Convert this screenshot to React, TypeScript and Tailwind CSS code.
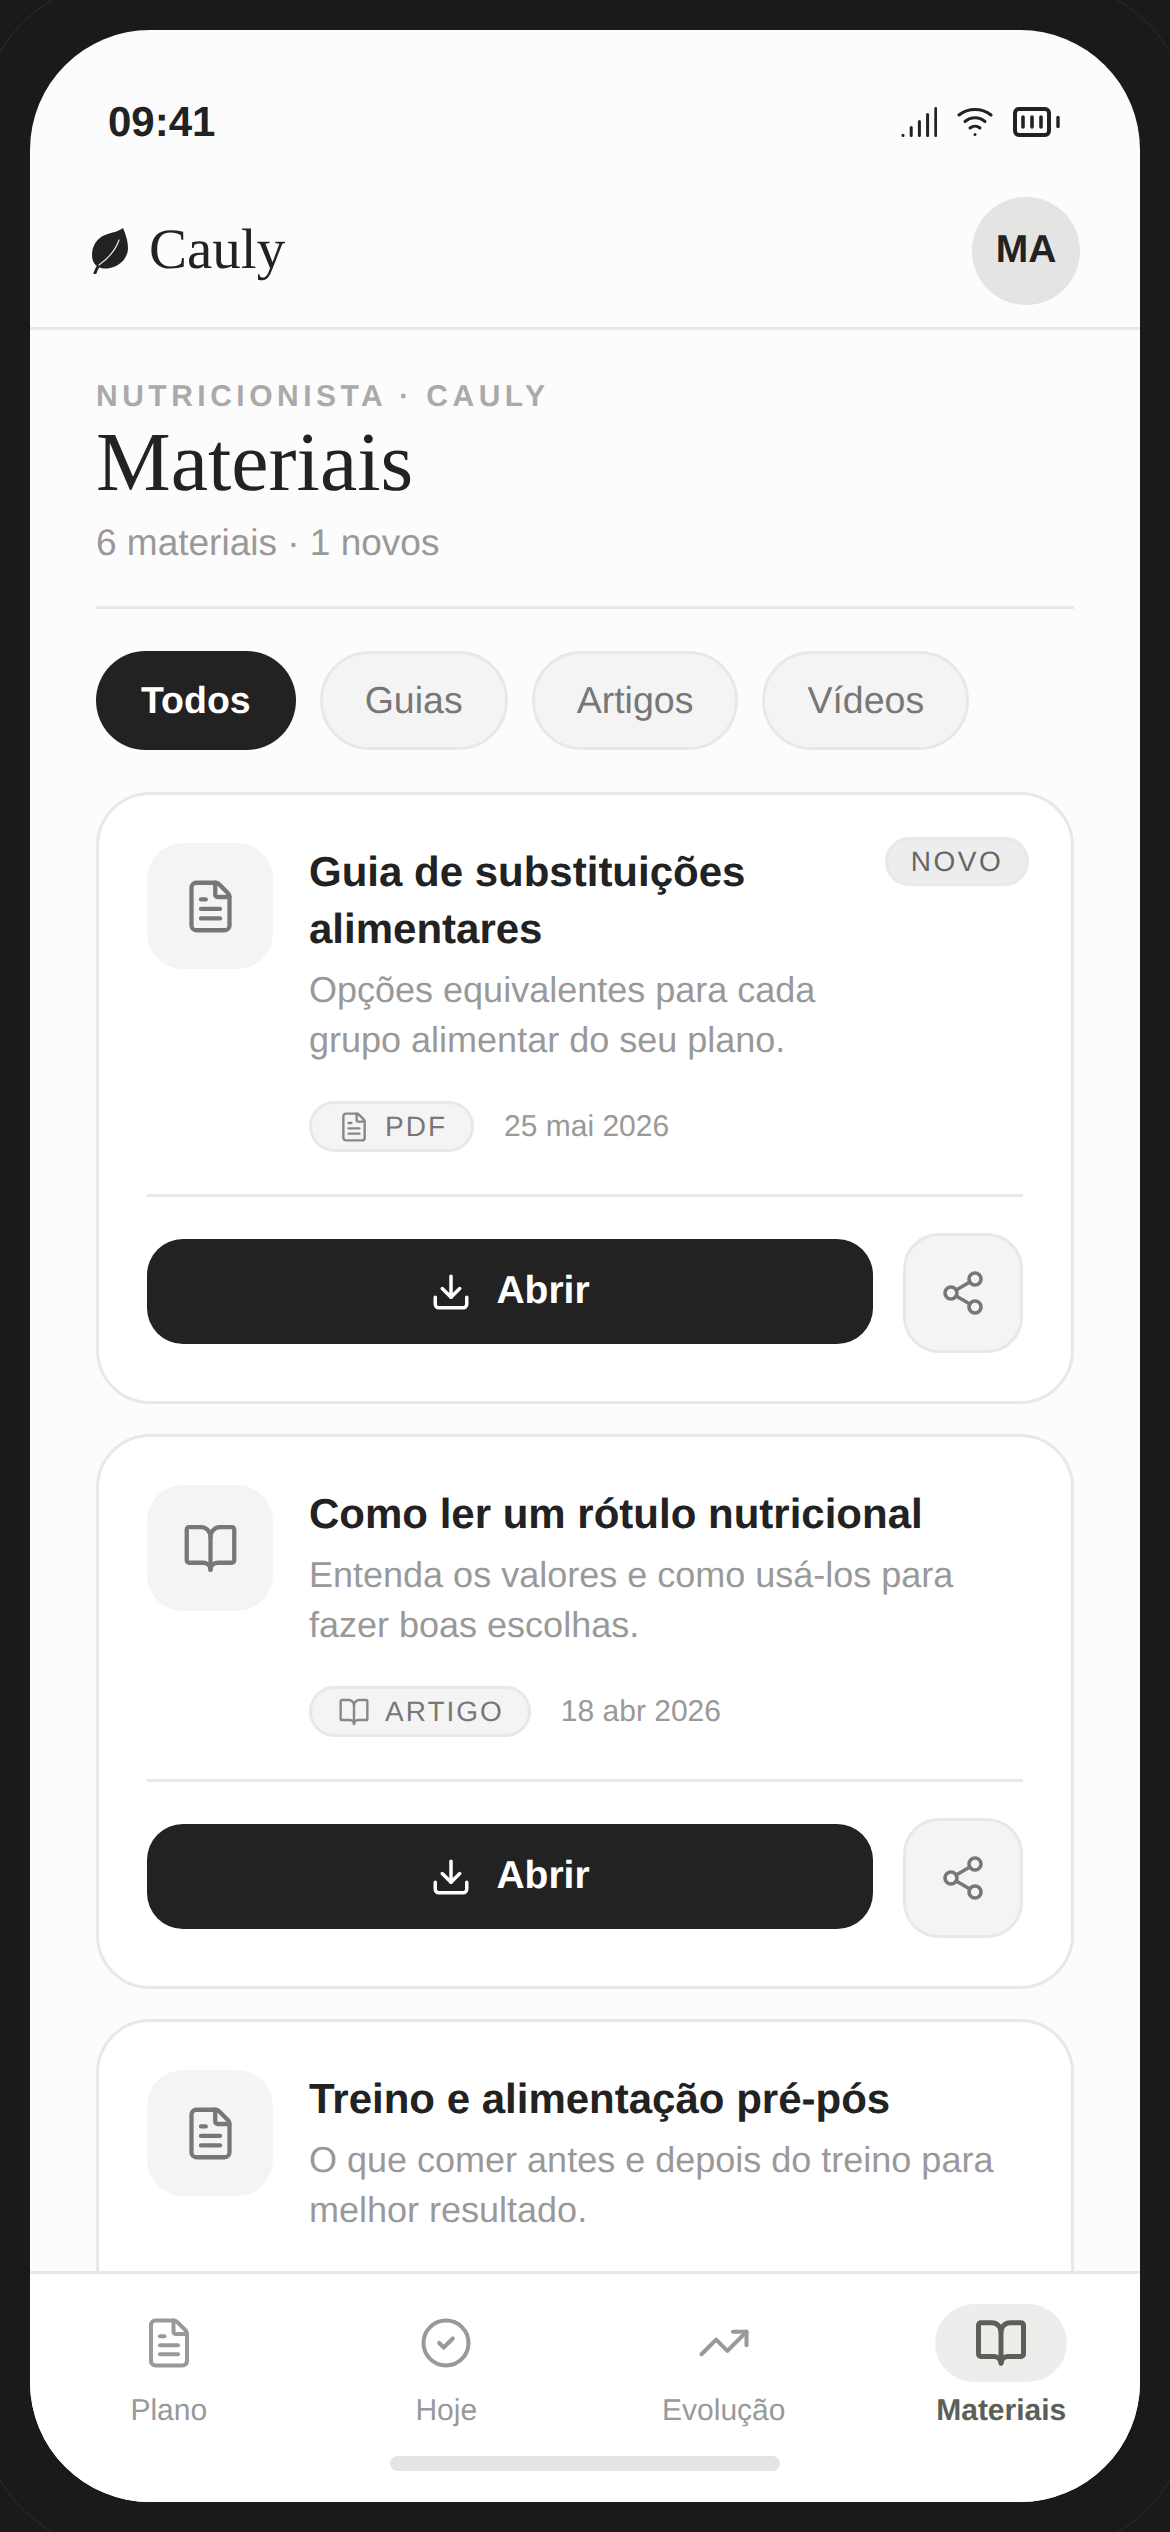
import { FileText, BookOpen, Download, Share2, CircleCheck, TrendingUp } from "lucide-react";

const sans = "font-['Liberation_Sans',Arial,sans-serif]";
const serif = "font-['Liberation_Serif','Times_New_Roman',serif]";

function Leaf() {
  return (
    <svg width="36" height="46" viewBox="0 0 36 46" fill="none">
      <path d="M31 0C26 4 20 4 13 7C5 10 0 18 0 27C0 32 2 36 5 38C9 41 14 41 18 40C28 38 36 30 36 20C36 12 33 5 31 0Z" fill="#222222" />
      <path d="M3 45C4 42 5 40 7 37" stroke="#222222" strokeWidth="3" strokeLinecap="round" />
      <path d="M7 37C14 32 23 24 27 12" stroke="#e8e8e8" strokeWidth="1.2" strokeLinecap="round" />
    </svg>
  );
}

function Signal() {
  return (
    <svg width="36" height="30" viewBox="0 0 36 30" fill="none" stroke="#222222" strokeWidth="3" strokeLinecap="round">
      <path d="M2 28.5v-.2M10.2 28.5v-8M18.4 28.5v-14M26.6 28.5v-21M34.8 28.5V1.5" />
    </svg>
  );
}

function Wifi() {
  return (
    <svg width="36" height="30" viewBox="0 0 36 30" fill="none" stroke="#222222" strokeWidth="3" strokeLinecap="round">
      <path d="M2 8C11 0.5 25 0.5 34 8" />
      <path d="M8 14.5C14 9.5 22 9.5 28 14.5" />
      <path d="M13 21C16 18.5 20 18.5 23 21" />
      <path d="M18 27.5v.1" />
    </svg>
  );
}

function Battery() {
  return (
    <svg width="47" height="30" viewBox="0 0 47 30" fill="none" stroke="#222222" strokeLinecap="round">
      <rect x="2" y="2" width="34" height="26" rx="4" strokeWidth="4" />
      <path d="M10 10v10M19 10v10M28 10v10" strokeWidth="3.6" />
      <path d="M45 10.5v9" strokeWidth="3.4" />
    </svg>
  );
}

type CardProps = {
  Icon: typeof FileText;
  title: string[];
  desc: string[];
  tag: string;
  date: string;
  novo?: boolean;
};

function Card({ Icon, title, desc, tag, date, novo }: CardProps) {
  return (
    <div className="relative shrink-0 rounded-[54px] border-[3px] border-[#e8e8e8] bg-white px-[48px] pt-[48px] pb-[48px]">
      {novo && (
        <span className="absolute right-[42px] top-[42px] flex h-[49px] w-[144px] items-center justify-center rounded-full border-[3px] border-[#e8e8e8] bg-[#ededed] text-[28px] tracking-[2.5px] text-[#666666]">
          NOVO
        </span>
      )}
      <div className="flex gap-[36px]">
        <div className="flex h-[126px] w-[126px] shrink-0 items-center justify-center rounded-[36px] bg-[#f4f4f4]">
          <Icon size={57} strokeWidth={1.8} color="#777777" />
        </div>
        <div className="min-w-0 flex-1">
          <div className="text-[42px] font-bold leading-[57px] text-[#222222]">
            {title.map((t) => (
              <div key={t}>{t}</div>
            ))}
          </div>
          <div className="mt-[8px] text-[36px] leading-[50px] text-[#999999]">
            {desc.map((t) => (
              <div key={t}>{t}</div>
            ))}
          </div>
          <div className="mt-[36px] flex items-center gap-[30px]">
            <span className="flex h-[51px] items-center gap-[15px] rounded-full border-[3px] border-[#e8e8e8] bg-[#f4f4f4] pl-[26px] pr-[24px] text-[28px] tracking-[2px] text-[#777777]">
              <Icon size={32} strokeWidth={1.8} color="#888888" />
              {tag}
            </span>
            <span className="text-[30px] text-[#999999]">{date}</span>
          </div>
        </div>
      </div>
      <div className="mt-[42px] h-[3px] bg-[#e8e8e8]" />
      <div className="mt-[36px] flex items-center gap-[30px]">
        <div className="mb-[3px] flex h-[105px] flex-1 items-center justify-center gap-[24px] rounded-[36px] bg-[#222222] text-[39px] font-bold text-white">
          <Download size={42} strokeWidth={2} color="#ffffff" />
          Abrir
        </div>
        <div className="flex h-[120px] w-[120px] items-center justify-center rounded-[36px] border-[3px] border-[#e8e8e8] bg-[#f4f4f4]">
          <Share2 size={48} strokeWidth={1.8} color="#777777" />
        </div>
      </div>
    </div>
  );
}

function Tab({ label, active }: { label: string; active?: boolean }) {
  return active ? (
    <span className="flex h-[99px] items-center rounded-full bg-[#222222] px-[45px] text-[37.5px] font-bold text-white">{label}</span>
  ) : (
    <span className="flex h-[99px] items-center rounded-full border-[3px] border-[#e8e8e8] bg-[#f4f4f4] px-[42px] text-[37.5px] text-[#777777]">{label}</span>
  );
}

function NavItem({ Icon, label, active }: { Icon: typeof FileText; label: string; active?: boolean }) {
  return (
    <div className="flex flex-col items-center">
      <div className={`flex h-[78px] w-[132px] items-center justify-center rounded-full ${active ? "bg-[#ededeb]" : ""}`}>
        <Icon size={54} strokeWidth={active ? 2.2 : 1.8} color={active ? "#5c5f57" : "#999999"} />
      </div>
      <span className={`mt-[11px] text-[30px] leading-[36px] ${active ? "font-bold text-[#5c5f57]" : "text-[#999999]"}`}>{label}</span>
    </div>
  );
}

export default function App() {
  return (
    <div className={`relative h-[2532px] w-[1170px] overflow-hidden bg-[#1a1a1a] p-[30px] [text-rendering:geometricPrecision] ${sans}`}>
      <div className="absolute -inset-[21px] rounded-[148px] border border-[#2c2c2c]" />
      <div className="relative flex h-[2472px] w-[1110px] flex-col overflow-hidden rounded-[120px] bg-[#fcfcfc]">
        <div className="flex h-[144px] shrink-0 items-center justify-between pl-[78px] pr-[80px] pt-[40px]">
          <span className="text-[42px] font-bold leading-[50px] text-[#222222]">09:41</span>
          <div className="flex items-center gap-[20px]">
            <Signal />
            <Wifi />
            <Battery />
          </div>
        </div>
        <div className="flex h-[156px] shrink-0 items-center justify-between border-b-[3px] border-[#e8e8e8] pl-[62px] pr-[60px]">
          <div className="flex items-center gap-[21px]">
            <Leaf />
            <span className={`${serif} mb-[2px] text-[57px] leading-none text-[#222222]`}>Cauly</span>
          </div>
          <div className="flex h-[108px] w-[108px] items-center justify-center rounded-full bg-[#e4e4e2] text-[39px] font-bold text-[#222222]">
            MA
          </div>
        </div>
        <div className="flex min-h-0 flex-1 flex-col overflow-hidden px-[66px] pt-[50px]">
          <div className="text-[30px] font-bold leading-[34px] tracking-[4.5px] text-[#aaaaaa]">NUTRICIONISTA · CAULY</div>
          <div className={`${serif} mt-[4px] text-[84px] leading-[90px] text-[#222222]`}>Materiais</div>
          <div className="mt-[10px] text-[37px] leading-[50px] text-[#999999]">6 materiais · 1 novos</div>
          <div className="mt-[38px] h-[3px] shrink-0 bg-[#e8e8e8]" />
          <div className="mt-[42px] flex shrink-0 gap-[24px]">
            <Tab label="Todos" active />
            <Tab label="Guias" />
            <Tab label="Artigos" />
            <Tab label="Vídeos" />
          </div>
          <div className="mt-[42px] flex flex-col gap-[30px]">
            <Card
              Icon={FileText}
              novo
              title={["Guia de substituições", "alimentares"]}
              desc={["Opções equivalentes para cada", "grupo alimentar do seu plano."]}
              tag="PDF"
              date="25 mai 2026"
            />
            <Card
              Icon={BookOpen}
              title={["Como ler um rótulo nutricional"]}
              desc={["Entenda os valores e como usá-los para", "fazer boas escolhas."]}
              tag="ARTIGO"
              date="18 abr 2026"
            />
            <Card
              Icon={FileText}
              title={["Treino e alimentação pré-pós"]}
              desc={["O que comer antes e depois do treino para", "melhor resultado."]}
              tag="PDF"
              date="02 abr 2026"
            />
          </div>
        </div>
        <div className="h-[231px] shrink-0 border-t-[3px] border-[#e8e8e8] bg-white">
          <div className="grid grid-cols-4 pt-[30px]">
            <NavItem Icon={FileText} label="Plano" />
            <NavItem Icon={CircleCheck} label="Hoje" />
            <NavItem Icon={TrendingUp} label="Evolução" />
            <NavItem Icon={BookOpen} label="Materiais" active />
          </div>
          <div className="mx-auto mt-[27px] h-[15px] w-[390px] rounded-full bg-[#e4e4e2]" />
        </div>
      </div>
    </div>
  );
}
